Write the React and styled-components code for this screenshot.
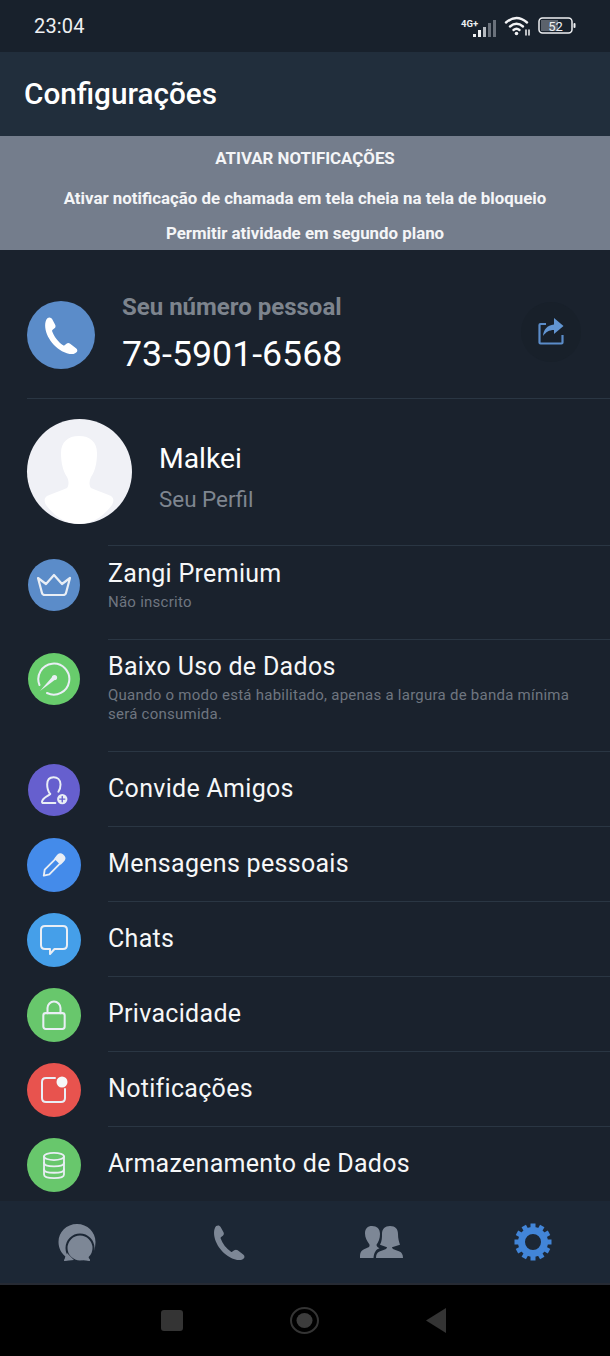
import React from "react";
import styled, { createGlobalStyle } from "styled-components";

const GlobalStyle = createGlobalStyle`
  html, body {
    margin: 0;
    padding: 0;
    background: #000;
  }
  * {
    box-sizing: border-box;
  }
`;

const Screen = styled.div`
  width: 610px;
  height: 1356px;
  display: flex;
  flex-direction: column;
  background: #1a222d;
  font-family: Roboto, "Liberation Sans", sans-serif;
  color: #fff;
  overflow: hidden;
`;

const StatusBar = styled.div`
  height: 52px;
  flex: none;
  background: #18212c;
  display: flex;
  align-items: center;
  justify-content: space-between;
  padding: 0 34px;
`;

const Clock = styled.span`
  font-size: 20px;
  color: #eef0f2;
  letter-spacing: 0.15px;
`;

const StatusIcons = styled.div`
  display: flex;
  align-items: center;
  gap: 6px;
`;

const Header = styled.header`
  height: 84px;
  flex: none;
  background: #212e3c;
  display: flex;
  align-items: center;
  padding: 0 24px 2px;
  font-size: 29.7px;
  font-weight: 500;
`;

const Banner = styled.div`
  height: 114px;
  flex: none;
  background: #747d8c;
  display: flex;
  flex-direction: column;
  align-items: center;
  padding-top: 12px;
  font-size: 16.85px;
  font-weight: 700;
  color: #f4f5f7;
`;

const BannerLine = styled.div`
  height: ${(p) => p.$h}px;
  line-height: 20px;
`;

const NumberRow = styled.div`
  height: 149px;
  flex: none;
  margin-left: 27px;
  display: flex;
  align-items: center;
  border-bottom: 1px solid #2a3643;
  padding: 22px 29px 0 0;
`;

const PhoneCircle = styled.div`
  width: 68px;
  height: 68px;
  border-radius: 50%;
  background: #5b8cc9;
  display: flex;
  align-items: center;
  justify-content: center;
  margin-right: 27px;
  flex: none;
`;

const NumberText = styled.div`
  flex: 1;
  margin-bottom: 3px;
`;

const NumberLabel = styled.div`
  font-size: 24px;
  font-weight: 700;
  color: #7d848d;
  line-height: 28px;
`;

const NumberValue = styled.div`
  font-size: 35.7px;
  line-height: 42px;
  margin-top: 12px;
`;

const ShareButton = styled.div`
  width: 60px;
  height: 60px;
  border-radius: 50%;
  background: #18202a;
  display: flex;
  align-items: center;
  justify-content: center;
  margin-top: -7px;
`;

const ProfileRow = styled.div`
  height: 146px;
  flex: none;
  padding-left: 27px;
  display: flex;
  align-items: center;
  gap: 27px;
`;

const Avatar = styled.div`
  width: 105px;
  height: 105px;
  border-radius: 50%;
  overflow: hidden;
  background: #f0f1f6;
  flex: none;
  margin-top: -1px;
`;

const ProfileName = styled.div`
  font-size: 28.3px;
  line-height: 32px;
  margin-top: 11px;
`;

const ProfileSub = styled.div`
  font-size: 22.4px;
  line-height: 26px;
  margin-top: 11px;
  color: #7f8690;
`;

const Row = styled.div`
  height: ${(p) => p.$h}px;
  flex: none;
  display: flex;
  align-items: flex-start;
  padding-left: 27px;
`;

const Circle = styled.div`
  width: ${(p) => p.$size}px;
  height: ${(p) => p.$size}px;
  margin: ${(p) => p.$top}px ${(p) => (54 - p.$size) / 2}px 0;
  border-radius: 50%;
  background: ${(p) => p.$color};
  flex: none;
  display: flex;
  align-items: center;
  justify-content: center;
`;

const RowBody = styled.div`
  flex: 1;
  height: 100%;
  margin-left: 27px;
  border-top: 1px solid #2a3643;
  display: flex;
  flex-direction: column;
  justify-content: ${(p) => (p.$top ? "flex-start" : "center")};
  padding-top: ${(p) => (p.$top ? `${p.$top}px` : "0")};
  padding-right: 36px;
`;

const RowTitle = styled.div`
  font-size: 25px;
  line-height: 30px;
  letter-spacing: 0.3px;
  color: #f6f7f8;
`;

const RowSub = styled.div`
  font-size: 15px;
  line-height: 19px;
  letter-spacing: 0.25px;
  color: #6f7680;
  margin-top: 4px;
`;

const TabBar = styled.nav`
  height: 84px;
  flex: none;
  background: #1c2735;
  border-bottom: 2px solid #262a33;
  display: grid;
  grid-template-columns: repeat(4, 1fr);
  padding: 0 1px;
`;

const Tab = styled.div`
  display: flex;
  align-items: center;
  justify-content: center;
`;

const NavBar = styled.div`
  flex: 1;
  background: #000;
  display: flex;
  align-items: center;
  justify-content: center;
  gap: 107px;
  padding-right: 4px;
`;

const NavSquare = styled.div`
  width: 22px;
  height: 21px;
  border-radius: 3px;
  background: #343434;
`;

const stroke = { fill: "none", stroke: "#e9eef5", strokeWidth: 2, strokeLinecap: "round", strokeLinejoin: "round" };

const Handset = ({ size, color }) => (
  <svg width={size} height={size} viewBox="0 0 36 38">
    <path
      d="M3.500 1.200c2-1.400 3.900-.7 5 1.200l3 5.600c.7 1.400.4 2.700-.7 3.600l-1.900 1.500c-.5.400-.7 1-.5 1.600 2 5.600 6.200 11 11.200 14.300.5.300 1.100.3 1.600-.1l1.900-1.400c1.200-.9 2.600-.9 3.800 0l6 4.500c1.600 1.200 1.800 3 .5 4.300-1.700 1.700-4.200 2.200-6.600 1.800C12 35.500 1 20 1.200 8.500c0-3 .8-5.700 2.300-7.300z"
      fill={color}
    />
  </svg>
);

const Crown = () => (
  <svg width="36" height="24" viewBox="0 0 36 24" {...stroke} strokeWidth="2.200">
    <path d="M2 5l8 6 8-9 8 9 8-6-4 15q-.5 2-3 2H9q-2.500 0-3-2z" />
  </svg>
);

const Gauge = () => (
  <svg width="36" height="36" viewBox="0 0 36 36" {...stroke}>
    <path d="M3.500 24A15.500 15.500 0 1 1 11 32" />
    <path d="M4 30L17 15l3 3z" fill="#e9eef5" stroke="none" />
    <circle cx="18.500" cy="16.500" r="2.600" fill="#e9eef5" stroke="none" />
  </svg>
);

const Invite = () => (
  <svg width="31" height="33" viewBox="0 0 36 36" {...stroke} strokeWidth="2.300">
    <path d="M13 22c-1 2-9 4-9.500 9-.1 1 .5 1.500 1.500 1.500h14" />
    <path d="M13 22c-2.500-3-3.500-7-3.500-11C9.500 5 13 2.500 17 2.500S25 5 25 11c0 3-.8 6-2.500 8.500" />
    <circle cx="27" cy="28" r="6" fill="#e9eef5" stroke="none" />
    <path d="M27 25v6M24 28h6" stroke="#665fce" strokeWidth="1.600" />
  </svg>
);

const Pencil = () => (
  <svg width="26" height="26" viewBox="0 0 28 28" {...stroke}>
    <path d="M4 19L17 6l5 5L9 24l-6 1.500z" />
    <path d="M18 4q2.500-3 5-.8l1.500 1.500q2 2.500-.8 5L21 12.500 15.500 7z" fill="#e9eef5" />
  </svg>
);

const Bubble = () => (
  <svg width="30" height="32" viewBox="0 0 30 32" {...stroke}>
    <path d="M6 2h18q4 0 4 4v15q0 4-4 4H15.500L11 30v-5H6q-4 0-4-4V6q0-4 4-4z" />
  </svg>
);

const Lock = () => (
  <svg width="26" height="32" viewBox="0 0 28 34" {...stroke} strokeWidth="2.200">
    <path d="M7 15V9.500a7 7 0 0 1 14 0V15" />
    <rect x="2.500" y="15" width="23" height="17" rx="2.500" />
  </svg>
);

const NotifyIcon = () => (
  <svg width="30" height="30" viewBox="0 0 30 30" {...stroke}>
    <path d="M16 3H7q-4 0-4 4v16q0 4 4 4h15q4 0 4-4v-9" />
    <circle cx="23" cy="7" r="5.500" fill="#f6f7f8" stroke="none" />
  </svg>
);

const Database = () => (
  <svg width="26" height="29" viewBox="0 0 26 32" {...stroke}>
    <ellipse cx="13" cy="6" rx="11" ry="4" />
    <path d="M2 6v20c0 2.500 5 4 11 4s11-1.500 11-4V6" />
    <path d="M2 13c0 2.500 5 4 11 4s11-1.500 11-4M2 20c0 2.500 5 4 11 4s11-1.500 11-4" />
  </svg>
);

const rows = [
  { h: 94, title: "Zangi Premium", sub: "Não inscrito", color: "#5b8cc9", Icon: Crown, size: 52, top: 14, bodyTop: 13 },
  {
    h: 112,
    title: "Baixo Uso de Dados",
    sub: "Quando o modo está habilitado, apenas a largura de banda mínima será consumida.",
    color: "#68cc6c",
    Icon: Gauge,
    size: 52,
    top: 14,
    bodyTop: 12,
  },
  { h: 75, title: "Convide Amigos", color: "#665fce", Icon: Invite, size: 52, top: 13 },
  { h: 75, title: "Mensagens pessoais", color: "#448bea", Icon: Pencil, size: 54, top: 12 },
  { h: 75, title: "Chats", color: "#459fe9", Icon: Bubble, size: 54, top: 12 },
  { h: 75, title: "Privacidade", color: "#68c76c", Icon: Lock, size: 54, top: 12 },
  { h: 75, title: "Notificações", color: "#e8534e", Icon: NotifyIcon, size: 54, top: 12 },
  { h: 75, title: "Armazenamento de Dados", color: "#68c76c", Icon: Database, size: 54, top: 12 },
];

const GEAR_TEETH = [0, 30, 60, 90, 120, 150, 180, 210, 240, 270, 300, 330];

const App = () => (
  <Screen>
    <GlobalStyle />
    <StatusBar>
      <Clock>23:04</Clock>
      <StatusIcons>
        <svg width="38" height="24" viewBox="0 0 38 24">
          <text x="1" y="13" fontSize="9.500" fontWeight="700" fontFamily="Roboto, sans-serif" fill="#eef0f2">4G+</text>
          <rect x="13" y="20" width="3" height="3" fill="#eef0f2" />
          <rect x="18" y="16" width="3" height="7" fill="#eef0f2" />
          <rect x="23" y="13" width="3" height="10" fill="#b6bbc1" />
          <rect x="28" y="9" width="3" height="14" fill="#6a717b" />
          <rect x="33" y="6" width="3" height="17" fill="#6a717b" />
        </svg>
        <svg width="28" height="22" viewBox="0 0 28 22" fill="none" stroke="#f2f3f5" strokeWidth="2.400" strokeLinecap="round">
          <path d="M2 7.500q10.500-9 21 0" />
          <path d="M6 11.500q6.500-5.500 13 0" />
          <path d="M9.500 15q3-2.500 6 0" />
          <circle cx="12.500" cy="18.500" r="1.800" fill="#f2f3f5" stroke="none" />
          <path d="M22 15v5M25 15v5" strokeWidth="1.500" />
        </svg>
        <svg width="38" height="18" viewBox="0 0 38 18">
          <rect x="1" y="1" width="33" height="15" rx="3.500" fill="none" stroke="#eef0f2" strokeWidth="1.500" />
          <rect x="3" y="3" width="17" height="11" fill="#5b626c" />
          <rect x="35.500" y="6" width="2" height="5" rx="1" fill="#eef0f2" />
          <text x="17.500" y="13.500" fontSize="13" textAnchor="middle" fontFamily="Roboto, sans-serif" fill="#eef0f2">52</text>
        </svg>
      </StatusIcons>
    </StatusBar>

    <Header>Configurações</Header>

    <Banner>
      <BannerLine $h={40}>ATIVAR NOTIFICAÇÕES</BannerLine>
      <BannerLine $h={35}>Ativar notificação de chamada em tela cheia na tela de bloqueio</BannerLine>
      <BannerLine $h={20}>Permitir atividade em segundo plano</BannerLine>
    </Banner>

    <NumberRow>
      <PhoneCircle>
        <Handset size={37} color="#fff" />
      </PhoneCircle>
      <NumberText>
        <NumberLabel>Seu número pessoal</NumberLabel>
        <NumberValue>73-5901-6568</NumberValue>
      </NumberText>
      <ShareButton>
        <svg width="26" height="27" viewBox="0 0 26 27">
          <path d="M8 6H2.500q-1 0-1 1v17.500q0 1 1 1h21q1 0 1-1V17" fill="none" stroke="#5b8cc9" strokeWidth="2.200" />
          <path d="M16 0l9.500 8-9.500 8v-4c-5 0-8 2-11 6 .5-6 4-11 11-11.500z" fill="#6295d2" />
        </svg>
      </ShareButton>
    </NumberRow>

    <ProfileRow>
      <Avatar>
        <svg width="105" height="105" viewBox="0 0 105 105">
          <path d="M52 17c11 0 18 6 18 17 0 10-2 18-6 24-2 4-2 8 0 11 6 3 14 5 20 8 3 2 3 5 1 9-9 12-20 19-33 19s-24-7-33-19c-2-4-2-7 1-9 6-3 14-5 20-8 2-3 2-7 0-11-4-6-6-14-6-24 0-11 7-17 18-17z" fill="#fff" />
        </svg>
      </Avatar>
      <div>
        <ProfileName>Malkei</ProfileName>
        <ProfileSub>Seu Perfil</ProfileSub>
      </div>
    </ProfileRow>

    {rows.map(({ h, title, sub, color, Icon, size, top, bodyTop }) => (
      <Row key={title} $h={h}>
        <Circle $color={color} $size={size} $top={top}>
          <Icon />
        </Circle>
        <RowBody $top={bodyTop}>
          <RowTitle>{title}</RowTitle>
          {sub && <RowSub>{sub}</RowSub>}
        </RowBody>
      </Row>
    ))}

    <TabBar>
      <Tab>
        <svg width="38" height="37" viewBox="0 0 38 37">
          <path d="M19 0C8.500 0 .5 8 .5 18c0 6 3 11.500 7 14.500L6 37l8-2h10l8 2-.5-4c4-3.500 6-8.500 6-15C37.500 8 29.500 0 19 0z" fill="#7d8796" />
          <circle cx="22" cy="24" r="13.500" fill="#7d8796" stroke="#1c2735" strokeWidth="2" />
          <path d="M6 37l3-8 7 7zM32 37l-3-8-6 7z" fill="#7d8796" />
        </svg>
      </Tab>
      <Tab>
        <Handset size={35} color="#7d8796" />
      </Tab>
      <Tab>
        <svg width="44" height="34" viewBox="0 0 44 38" preserveAspectRatio="none">
          <path d="M13 1c5 0 8 3 8 9 0 5-1.500 9-3.500 12 0 1.500 1 3 3 4-3 1-5.500 4-6 11H1c0-6 .5-8 4-10l5-2.500c.7-1 .7-2 .3-3C8 18 6 14 6 9.500 6 4 8.500 1 13 1z" fill="#7d8796" />
          <path d="M31 1c5.500 0 8 3.500 8 9 0 5 1 9 2 12l-8 3c0 1 .5 1.500 1.500 2l6 2.500c2 1 3.500 3 3.500 7.500H17c0-4 1-6 3.500-7.500l6-2.500c1-.5 1.500-1 1.500-2l-7-3c2-4 2-8 2-12 0-6 3-9 8-9z" fill="#7d8796" />
        </svg>
      </Tab>
      <Tab>
        <svg width="38" height="40" viewBox="-19 -20 38 40">
          {GEAR_TEETH.map((a) => (
            <rect key={a} x="-2.500" y="-18.500" width="5" height="6" fill="#4285d8" transform={`rotate(${a})`} />
          ))}
          <circle r="11.500" fill="none" stroke="#4285d8" strokeWidth="7" />
        </svg>
      </Tab>
    </TabBar>

    <NavBar>
      <NavSquare />
      <svg width="29" height="27" viewBox="0 0 29 27">
        <ellipse cx="14.500" cy="13.500" rx="13.500" ry="12.500" fill="none" stroke="#343434" strokeWidth="2" />
        <ellipse cx="14.500" cy="13.500" rx="8" ry="7.500" fill="#3c3c3c" />
      </svg>
      <svg width="20" height="25" viewBox="0 0 20 25">
        <path d="M20 0v25L0 12.500z" fill="#343434" />
      </svg>
    </NavBar>
  </Screen>
);

export default App;
